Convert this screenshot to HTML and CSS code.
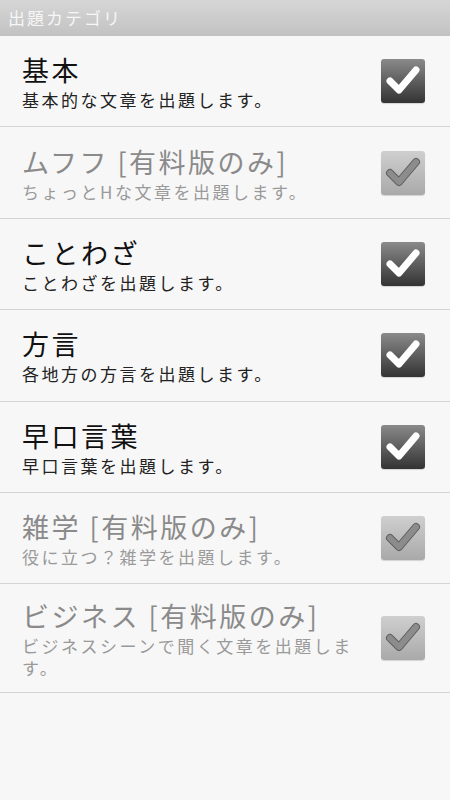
FILE: index.html
```html
<!DOCTYPE html>
<html>
<head>
  <meta charset="utf-8">
  <title>出題カテゴリ</title>
  <link rel="stylesheet" href="styles.css">
</head>
<body>
  <header class="title-bar">出題カテゴリ</header>

  <ul class="category-list">
    <li class="row">
      <div class="text">
        <div class="name">基本</div>
        <div class="desc">基本的な文章を出題します。</div>
      </div>
      <span class="check"><svg viewBox="0 0 44 44"><path d="M9 22 L18 31 L35 11"/></svg></span>
    </li>
    <li class="row disabled">
      <div class="text">
        <div class="name">ムフフ [有料版のみ]</div>
        <div class="desc">ちょっとHな文章を出題します。</div>
      </div>
      <span class="check"><svg viewBox="0 0 44 44"><path class="edge" d="M9 22 L18 31 L35 11"/><path d="M9 22 L18 31 L35 11"/></svg></span>
    </li>
    <li class="row">
      <div class="text">
        <div class="name">ことわざ</div>
        <div class="desc">ことわざを出題します。</div>
      </div>
      <span class="check"><svg viewBox="0 0 44 44"><path d="M9 22 L18 31 L35 11"/></svg></span>
    </li>
    <li class="row">
      <div class="text">
        <div class="name">方言</div>
        <div class="desc">各地方の方言を出題します。</div>
      </div>
      <span class="check"><svg viewBox="0 0 44 44"><path d="M9 22 L18 31 L35 11"/></svg></span>
    </li>
    <li class="row">
      <div class="text">
        <div class="name">早口言葉</div>
        <div class="desc">早口言葉を出題します。</div>
      </div>
      <span class="check"><svg viewBox="0 0 44 44"><path d="M9 22 L18 31 L35 11"/></svg></span>
    </li>
    <li class="row disabled">
      <div class="text">
        <div class="name">雑学 [有料版のみ]</div>
        <div class="desc">役に立つ？雑学を出題します。</div>
      </div>
      <span class="check"><svg viewBox="0 0 44 44"><path class="edge" d="M9 22 L18 31 L35 11"/><path d="M9 22 L18 31 L35 11"/></svg></span>
    </li>
    <li class="row disabled">
      <div class="text">
        <div class="name">ビジネス [有料版のみ]</div>
        <div class="desc">ビジネスシーンで聞く文章を出題します。</div>
      </div>
      <span class="check"><svg viewBox="0 0 44 44"><path class="edge" d="M9 22 L18 31 L35 11"/><path d="M9 22 L18 31 L35 11"/></svg></span>
    </li>
  </ul>
</body>
</html>
```

FILE: styles.css
```css
body {
  margin: 0;
  padding: 0;
  background-color: #f7f7f7;
  font-family: "Noto Sans CJK JP", "Noto Sans", sans-serif;
  color: #111;
}

.title-bar {
  height: 36px;
  line-height: 35px;
  padding-left: 8px;
  font-size: 17px;
  letter-spacing: 2px;
  color: #f6f6f6;
  background: linear-gradient(#d6d6d6, #c2c2c2);
}

.category-list {
  list-style: none;
  margin: 0;
  padding: 0;
}

.row {
  display: flex;
  align-items: center;
  min-height: 64.4px;
  padding: 13px 25px 13px 22px;
  border-bottom: 1px solid #d4d4d4;
}

.text {
  flex: 1;
  padding-right: 18px;
}

.name {
  font-size: 27px;
  line-height: 38px;
  letter-spacing: 2.5px;
}

.desc {
  font-size: 17px;
  line-height: 22px;
  letter-spacing: 2.5px;
  color: #222;
}

.disabled .name {
  color: #8a8a8a;
}

.disabled .desc {
  color: #9a9a9a;
}

/* checkbox */
.check {
  flex: none;
  width: 44px;
  height: 44px;
  border-radius: 3px;
  background: linear-gradient(#8a8a8a, #333);
  box-shadow: 0 1px 1px rgba(0, 0, 0, 0.15);
}

.check svg {
  display: block;
  width: 44px;
  height: 44px;
}

.check path {
  fill: none;
  stroke: #fff;
  stroke-width: 7;
  stroke-linecap: round;
  stroke-linejoin: round;
}

.disabled .check {
  background: linear-gradient(#cfcfcf, #a9a9a9);
}

.disabled .check path {
  stroke: #8c8c8c;
  stroke-width: 6;
}

.disabled .check path.edge {
  stroke: #5e5e5e;
  stroke-width: 8;
}
```
